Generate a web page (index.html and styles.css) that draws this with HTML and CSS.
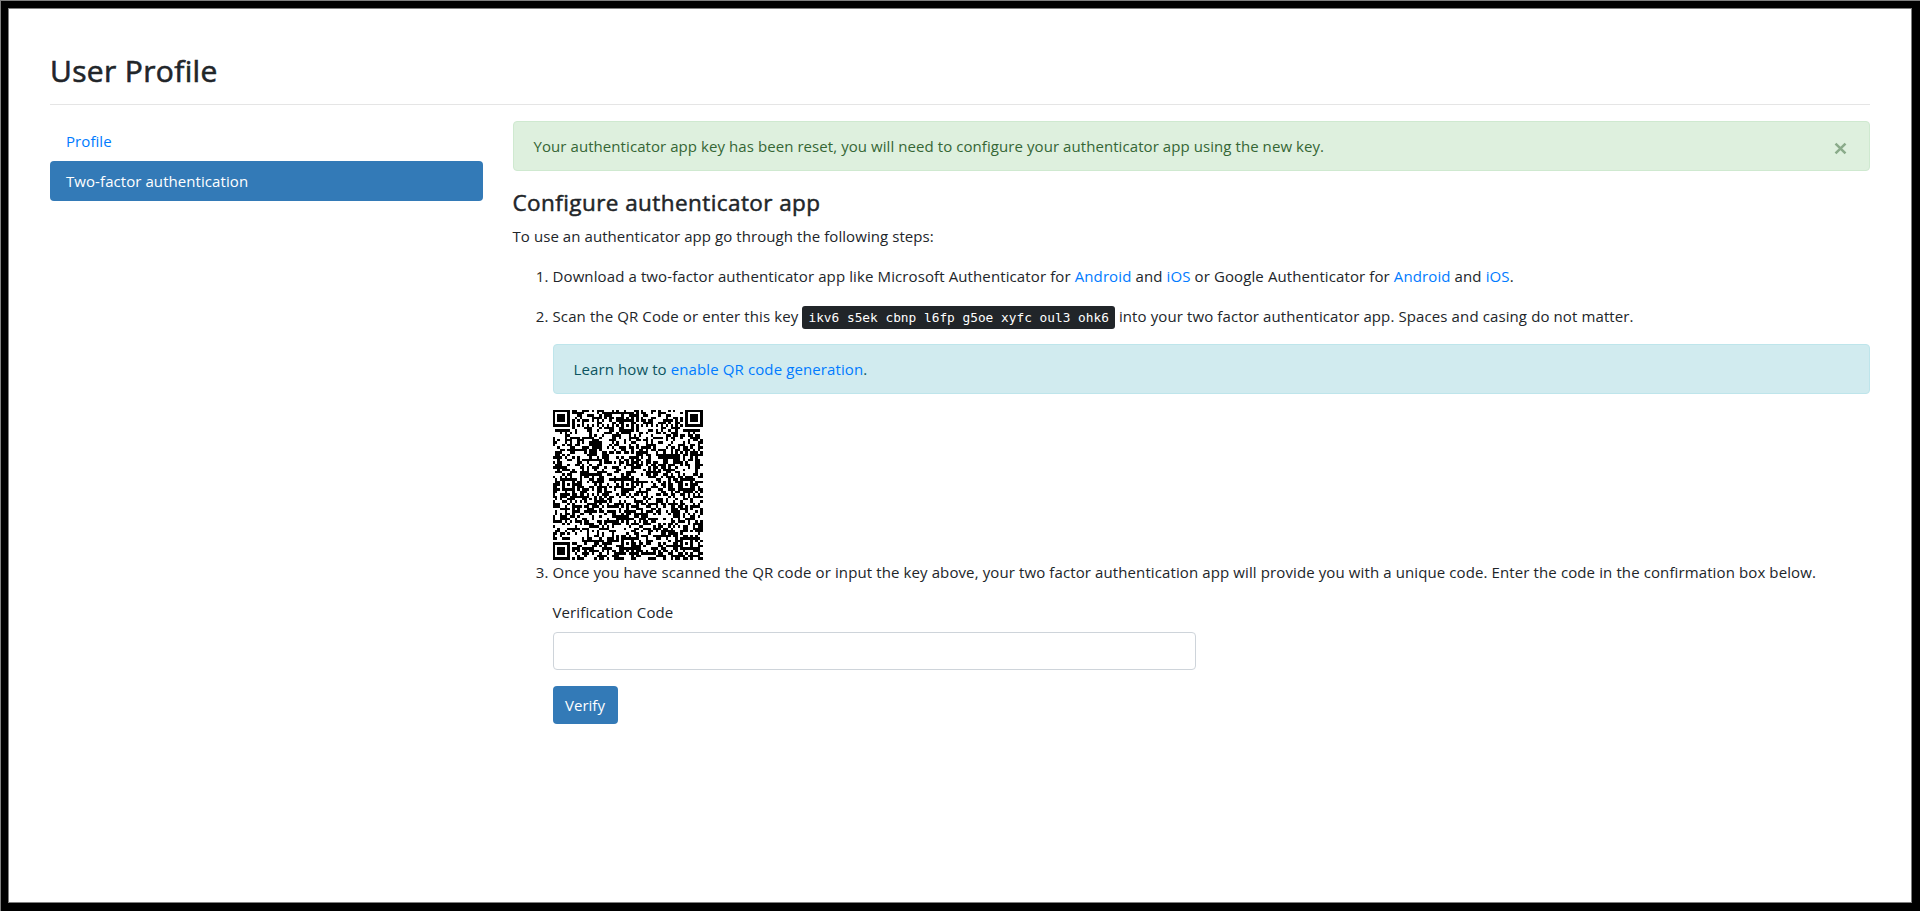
FILE: index.html
```html
<!DOCTYPE html>
<html lang="en">
<head>
  <meta charset="UTF-8">
  <meta name="viewport" content="width=device-width, initial-scale=1">
  <title>User Profile</title>
  <link rel="stylesheet" href="styles.css">
</head>
<body>

<div class="frame">
  <div class="page">
    <h1>User Profile</h1>
    <hr>
    <div class="row">
      <nav class="sidebar">
        <a class="nav-link" href="#">Profile</a>
        <a class="nav-link active" href="#">Two-factor authentication</a>
      </nav>

      <main class="content">
        <div class="alert alert-success">
          <span>Your authenticator app key has been reset, you will need to configure your authenticator app using the new key.</span>
          <button class="close" type="button" aria-label="Close">
            <svg width="13" height="13" viewBox="0 0 12 12"><path d="M1.4 1.4L10.6 10.6M10.6 1.4L1.4 10.6" /></svg>
          </button>
        </div>

        <h4>Configure authenticator app</h4>
        <p>To use an authenticator app go through the following steps:</p>
        <ol class="steps">
          <li>
            <p>Download a two-factor authenticator app like Microsoft Authenticator for <a href="#">Android</a> and <a href="#">iOS</a> or Google Authenticator for <a href="#">Android</a> and <a href="#">iOS</a>.</p>
          </li>
          <li>
            <p>Scan the QR Code or enter this key <kbd>ikv6 s5ek cbnp l6fp g5oe xyfc oul3 ohk6</kbd> into your two factor authenticator app. Spaces and casing do not matter.</p>
            <div class="alert alert-info"><span>Learn how to <a href="#">enable QR code generation</a>.</span></div>
            <canvas class="qr" id="qrCode" width="150" height="150"></canvas>
          </li>
          <li>
            <p>Once you have scanned the QR code or input the key above, your two factor authentication app will provide you with a unique code. Enter the code in the confirmation box below.</p>
            <form class="verify-form">
              <label for="code">Verification Code</label>
              <input class="form-control" id="code" type="text" autocomplete="off">
              <button class="btn" type="button">Verify</button>
            </form>
          </li>
        </ol>
      </main>
    </div>
  </div>
</div>

<script src="qr.js"></script>
</body>
</html>
```
FILE: styles.css
```css
* {
  box-sizing: border-box;
}

body {
  margin: 0;
  font-family: "Segoe UI", "Open Sans", "Noto Sans", sans-serif;
  font-size: 15px;
  line-height: 24px;
  letter-spacing: 0.07px;
  color: #212529;
  background: #fff;
}

.frame {
  height: 100vh;
  background: #000;
  border-top: 1px solid #7f7f7f;
  border-left: 1px solid #7f7f7f;
  padding: 7px 8px 8px 7px;
}

.page {
  height: 100%;
  background: #fff;
  border: 1px solid #7f7f7f;
  padding: 43px 41px 0;
}

h1 {
  margin: 0 0 14px;
  font-size: 30px;
  line-height: 38px;
  font-weight: 500;
  letter-spacing: 0.35px;
  -webkit-text-stroke: 0.6px #212529;
}

hr {
  margin: 14px 0 16px;
  border: 0;
  border-top: 1px solid #e5e5e5;
}

h4 {
  margin: 0 0 7px;
  padding-top: 1px;
  font-size: 22.5px;
  line-height: 29px;
  font-weight: 500;
  letter-spacing: 0.42px;
  -webkit-text-stroke: 0.5px #212529;
}

p {
  margin: 0 0 16px;
}

a {
  color: #007bff;
  text-decoration: none;
}

.row {
  display: grid;
  grid-template-columns: 432.5px 1fr;
  gap: 30px;
}

.nav-link {
  display: block;
  padding: 8px 16px;
  border-radius: 4px;
}

.nav-link.active {
  background: #337ab7;
  color: #fff;
}

.alert {
  display: flex;
  justify-content: space-between;
  align-items: center;
  height: 50px;
  margin-bottom: 16px;
  padding: 0 20px;
  border: 1px solid transparent;
  border-radius: 4px;
}

.alert-success {
  color: #356635;
  background: #def0de;
  border-color: #cfe9d0;
}

.alert-info {
  color: #0c5460;
  background: #d1ebef;
  border-color: #bee5eb;
}

.close {
  display: flex;
  margin: 5px 2px 0 0;
  padding: 0;
  border: 0;
  background: none;
}

.close svg {
  fill: none;
  stroke: #8aab8a;
  stroke-width: 2.3;
}

.steps {
  margin: 0;
  padding-left: 40px;
  letter-spacing: 0.11px;
}

kbd {
  padding: 4px 6px;
  font-family: Consolas, "DejaVu Sans Mono", monospace;
  font-size: 12.8px;
  line-height: 1;
  letter-spacing: 0;
  color: #fff;
  background: #212529;
  border-radius: 3px;
}

.qr {
  display: block;
}

.verify-form {
  display: flex;
  flex-direction: column;
  align-items: flex-start;
  width: 643px;
}

.form-control {
  width: 100%;
  height: 38px;
  margin: 8px 0 16px;
  padding: 6px 12px;
  border: 1px solid #ced4da;
  border-radius: 4px;
}

.btn {
  width: 65px;
  height: 38px;
  padding: 0;
  font: inherit;
  color: #fff;
  background: #337ab7;
  border: 0;
  border-radius: 4px;
}
```
FILE: qr.js
```javascript
const count = 61;
const canvas = document.getElementById('qrCode');
const ctx = canvas.getContext('2d');
const size = canvas.width / count;
const modules = [];
let seed = 4173;

function nextBit() {
  seed = (seed * 1103515245 + 12345) % 2147483648;
  return (seed >> 16) % 100 < 51;
}

// square rings centred on a module, used by finder and alignment patterns
function drawRings(row, col, radius, darkRings) {
  for (let r = -radius; r <= radius; r++) {
    for (let c = -radius; c <= radius; c++) {
      if (modules[row + r] === undefined || modules[row + r][col + c] === undefined) continue;
      modules[row + r][col + c] = darkRings.includes(Math.max(Math.abs(r), Math.abs(c)));
    }
  }
}

for (let r = 0; r < count; r++) {
  modules.push([]);
  for (let c = 0; c < count; c++) {
    modules[r].push(nextBit());
  }
}

// timing lines
for (let i = 0; i < count; i++) {
  modules[6][i] = i % 2 === 0;
  modules[i][6] = i % 2 === 0;
}

[[6, 30], [30, 6], [30, 30], [30, 54], [54, 30], [54, 54]].forEach(([r, c]) => drawRings(r, c, 2, [0, 2]));
[[3, 3], [3, count - 4], [count - 4, 3]].forEach(([r, c]) => drawRings(r, c, 4, [0, 1, 3]));

// stroke both sides so fractional modules leave no gaps
for (let r = 0; r < count; r++) {
  for (let c = 0; c < count; c++) {
    const x = c * size;
    const y = r * size;
    const w = Math.round(size);
    ctx.fillStyle = ctx.strokeStyle = modules[r][c] ? '#000' : '#fff';
    ctx.fillRect(x, y, size, size);
    ctx.strokeRect(Math.floor(x) + 0.5, Math.floor(y) + 0.5, w, w);
    ctx.strokeRect(Math.ceil(x) - 0.5, Math.ceil(y) - 0.5, w, w);
  }
}
```
